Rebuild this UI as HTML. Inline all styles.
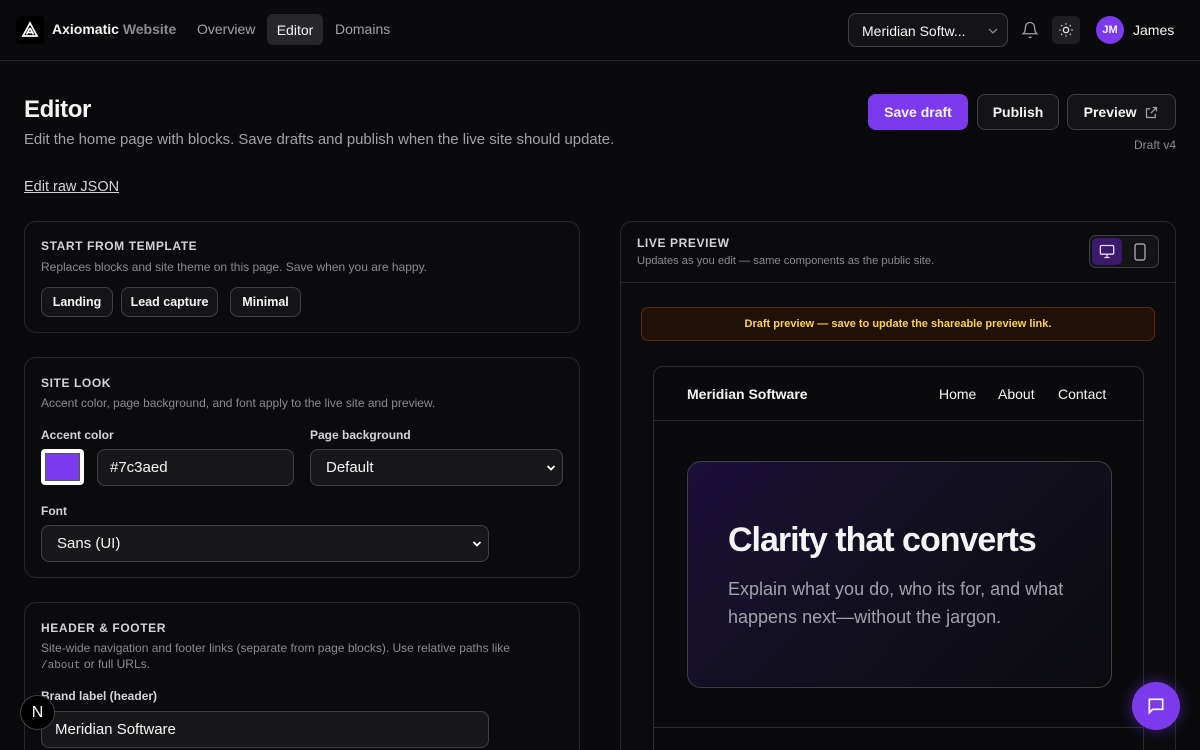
<!DOCTYPE html>
<html style="width:1200px;height:750px;overflow:hidden"><head><meta charset="utf-8"><style>
*{box-sizing:border-box;margin:0;padding:0}
body{width:1200px;height:750px;overflow:hidden;background:#0a0a0c;color:#f4f4f5;font-family:"Liberation Sans",sans-serif;position:relative}
.abs{position:absolute}
.hdr{position:absolute;left:0;top:0;width:1200px;height:61px;border-bottom:1px solid #27272a}
.btn{position:absolute;border:1px solid #3f3f46;background:#141417;border-radius:8px;font-weight:bold;font-size:14px;display:flex;align-items:center;justify-content:center;color:#f4f4f5}
.card{position:absolute;border:1px solid #27272a;border-radius:12px;background:#0b0b0d}
.cap{position:absolute;font-size:12px;font-weight:bold;letter-spacing:.6px;color:#d4d4d8}
.sub{position:absolute;font-size:12px;color:#8a8a93}
.lbl{position:absolute;font-size:12px;font-weight:bold;color:#d4d4d8}
.inp{position:absolute;border:1px solid #3f3f46;background:#18181b;border-radius:8px;font-size:15px;display:flex;align-items:center;padding-left:13px;color:#f4f4f5}
.chev{position:absolute;right:6px;top:50%;margin-top:-5px}
</style></head><body>
<div class="hdr">
 <div class="abs" style="left:16px;top:16px;width:28px;height:28px;background:#000;border-radius:4px">
  <svg width="28" height="28" viewBox="0 0 28 28"><path d="M14 7 L21 20 H7 Z M14 12 L17.5 18.5 M14 12 L10.5 18.5 M11.5 16.5 H16.5" stroke="#fff" stroke-width="1.8" fill="none"/></svg>
 </div>
 <div class="abs" style="left:52px;top:21px;font-size:14px;font-weight:bold">Axiomatic <span style="color:#8a8a93">Website</span></div>
 <div class="abs" style="left:197px;top:21px;font-size:14px;color:#a1a1aa">Overview</div>
 <div class="abs" style="left:267px;top:14px;width:56px;height:31px;background:#27272a;border-radius:6px;font-size:14px;display:flex;align-items:center;justify-content:center">Editor</div>
 <div class="abs" style="left:335px;top:21px;font-size:14px;color:#a1a1aa">Domains</div>
 <div class="abs" style="left:848px;top:13px;width:160px;height:34px;border:1px solid #3f3f46;border-radius:8px;background:#141417;font-size:14px;padding:9px 0 0 13px">Meridian Softw...
  <svg class="abs" style="right:9px;top:13px" width="10" height="8"><path d="M1 2l4 4 4-4" stroke="#8a8a93" fill="none" stroke-width="1.3"/></svg></div>
 <svg class="abs" style="left:1021px;top:21px" width="18" height="18" viewBox="0 0 24 24" fill="none" stroke="#a1a1aa" stroke-width="1.8"><path d="M6 8a6 6 0 0112 0c0 7 3 9 3 9H3s3-2 3-9M10.3 21a1.9 1.9 0 003.4 0"/></svg>
 <div class="abs" style="left:1052px;top:16px;width:28px;height:28px;background:#1f1f23;border-radius:5px">
  <svg class="abs" style="left:6px;top:6px" width="16" height="16" viewBox="0 0 24 24" fill="none" stroke="#e4e4e7" stroke-width="2"><circle cx="12" cy="12" r="4"/><path d="M12 2v2M12 20v2M4.9 4.9l1.4 1.4M17.7 17.7l1.4 1.4M2 12h2M20 12h2M4.9 19.1l1.4-1.4M17.7 6.3l1.4-1.4"/></svg></div>
 <div class="abs" style="left:1096px;top:16px;width:28px;height:28px;border-radius:50%;background:#7c3aed;font-size:11px;font-weight:bold;display:flex;align-items:center;justify-content:center">JM</div>
 <div class="abs" style="left:1133px;top:22px;font-size:14px">James</div>
</div>

<div class="abs" style="left:24px;top:96px;font-size:24px;font-weight:bold;letter-spacing:-.4px">Editor</div>
<div class="abs" style="left:24px;top:132px;font-size:14.9px;color:#a1a1aa">Edit the home page with blocks. Save drafts and publish when the live site should update.</div>
<div class="abs" style="left:24px;top:179px;font-size:14.5px;color:#d4d4d8;text-decoration:underline">Edit raw JSON</div>

<div class="btn" style="left:868px;top:94px;width:100px;height:36px;background:#7c3aed;border-color:#7c3aed">Save draft</div>
<div class="btn" style="left:977px;top:94px;width:82px;height:36px">Publish</div>
<div class="btn" style="left:1067px;top:94px;width:109px;height:36px">Preview&nbsp;&nbsp;<svg width="15" height="15" viewBox="0 0 24 24" fill="none" stroke="#a1a1aa" stroke-width="2"><path d="M14 4h6v6M20 4l-9 9M18 14v6H4V6h6"/></svg></div>
<div class="abs" style="right:24px;top:138px;font-size:12px;color:#8a8a93">Draft v4</div>

<div class="card" style="left:24px;top:221px;width:556px;height:112px">
 <div class="cap" style="left:16px;top:17px">START FROM TEMPLATE</div>
 <div class="sub" style="left:16px;top:38px">Replaces blocks and site theme on this page. Save when you are happy.</div>
 <div class="btn" style="left:16px;top:65px;width:72px;height:30px;font-size:12.5px">Landing</div>
 <div class="btn" style="left:96px;top:65px;width:97px;height:30px;font-size:12.5px">Lead capture</div>
 <div class="btn" style="left:205px;top:65px;width:71px;height:30px;font-size:12.5px">Minimal</div>
</div>

<div class="card" style="left:24px;top:357px;width:556px;height:221px">
 <div class="cap" style="left:16px;top:18px">SITE LOOK</div>
 <div class="sub" style="left:16px;top:38px">Accent color, page background, and font apply to the live site and preview.</div>
 <div class="lbl" style="left:16px;top:70px">Accent color</div>
 <div class="abs" style="left:16px;top:91px;width:43px;height:36px;background:#fff;border-radius:4px;padding:4px"><div style="width:100%;height:100%;background:#7c3aed;border:1px solid #555"></div></div>
 <div class="inp" style="left:72px;top:91px;width:197px;height:37px;padding-left:12px">#7c3aed</div>
 <div class="lbl" style="left:285px;top:70px">Page background</div>
 <div class="inp" style="left:285px;top:91px;width:253px;height:37px;padding-left:15px">Default<svg class="chev" width="10" height="10"><path d="M1.5 3l3.5 3.5 3.5-3.5" stroke="#fff" fill="none" stroke-width="1.8"/></svg></div>
 <div class="lbl" style="left:16px;top:146px">Font</div>
 <div class="inp" style="left:16px;top:167px;width:448px;height:37px;padding-left:15px">Sans (UI)<svg class="chev" width="10" height="10"><path d="M1.5 3l3.5 3.5 3.5-3.5" stroke="#fff" fill="none" stroke-width="1.8"/></svg></div>
</div>

<div class="card" style="left:24px;top:602px;width:556px;height:200px">
 <div class="cap" style="left:16px;top:18px">HEADER &amp; FOOTER</div>
 <div class="sub" style="left:16px;top:37px;line-height:16px">Site-wide navigation and footer links (separate from page blocks). Use relative paths like<br><span style="font-family:'Liberation Mono',monospace;font-size:11px">/about</span> or full URLs.</div>
 <div class="lbl" style="left:16px;top:86px">Brand label (header)</div>
 <div class="inp" style="left:16px;top:108px;width:448px;height:37px">Meridian Software</div>
</div>

<div class="card" style="left:620px;top:221px;width:556px;height:560px">
 <div class="cap" style="left:16px;top:14px">LIVE PREVIEW</div>
 <div class="sub" style="left:16px;top:33px;font-size:11.2px">Updates as you edit — same components as the public site.</div>
 <div class="abs" style="left:468px;top:13px;width:70px;height:33px;border:1px solid #3f3f46;border-radius:7px;background:#141417">
  <div class="abs" style="left:2px;top:2px;width:30px;height:27px;background:#3b1a6b;border-radius:5px">
   <svg class="abs" style="left:7px;top:6px" width="16" height="15" viewBox="0 0 24 22" fill="none" stroke="#e9d5ff" stroke-width="2"><rect x="2" y="2" width="20" height="13" rx="2"/><path d="M8 20h8M12 15v5"/></svg></div>
  <svg class="abs" style="left:44px;top:7px" width="12" height="18" viewBox="0 0 12 18" fill="none" stroke="#a1a1aa" stroke-width="1.4"><rect x="1" y="1" width="10" height="16" rx="2"/><path d="M6 14h.1"/></svg>
 </div>
 <div class="abs" style="left:0;top:60px;width:554px;border-top:1px solid #27272a"></div>
 <div class="abs" style="left:20px;top:85px;width:514px;height:34px;border:1px solid #5a2a0c;background:#1f1008;border-radius:7px;color:#fcd34d;font-size:11px;font-weight:bold;display:flex;align-items:center;justify-content:center">Draft preview — save to update the shareable preview link.</div>
 <div class="abs" style="left:32px;top:144px;width:491px;height:420px;border:1px solid #2c2c30;border-radius:10px;background:#0a0a0c">
  <div class="abs" style="left:33px;top:19px;font-size:14px;font-weight:bold">Meridian Software</div>
  <div class="abs" style="left:285px;top:19px;font-size:14px">Home</div>
  <div class="abs" style="left:344px;top:19px;font-size:14px">About</div>
  <div class="abs" style="left:404px;top:19px;font-size:14px">Contact</div>
  <div class="abs" style="left:0;top:53px;width:489px;border-top:1px solid #2c2c30"></div>
  <div class="abs" style="left:33px;top:94px;width:425px;height:227px;border:1px solid #3f3f46;border-radius:14px;background:linear-gradient(135deg,#1d0f3a 0%,#12101f 45%,#0b0b10 100%)">
   <div class="abs" style="left:40px;top:59px;font-size:34px;font-weight:bold;letter-spacing:-1px">Clarity that converts</div>
   <div class="abs" style="left:40px;top:113px;font-size:18px;line-height:28px;color:#a1a1aa;width:360px">Explain what you do, who its for, and what happens next—without the jargon.</div>
  </div>
  <div class="abs" style="left:0;top:360px;width:489px;border-top:1px solid #2c2c30"></div>
 </div>
</div>

<div class="abs" style="left:1132px;top:682px;width:48px;height:48px;border-radius:50%;background:#7c3aed;box-shadow:0 0 14px rgba(124,58,237,.5)">
 <svg class="abs" style="left:14px;top:14px" width="20" height="20" viewBox="0 0 24 24" fill="none" stroke="#fff" stroke-width="2"><path d="M4 4h16v12H8l-4 4z"/></svg></div>
<div class="abs" style="left:20px;top:695px;width:35px;height:35px;border-radius:50%;background:#000;border:1px solid #3f3f46;color:#fff;font-size:16px;display:flex;align-items:center;justify-content:center">N</div>
</body></html>
